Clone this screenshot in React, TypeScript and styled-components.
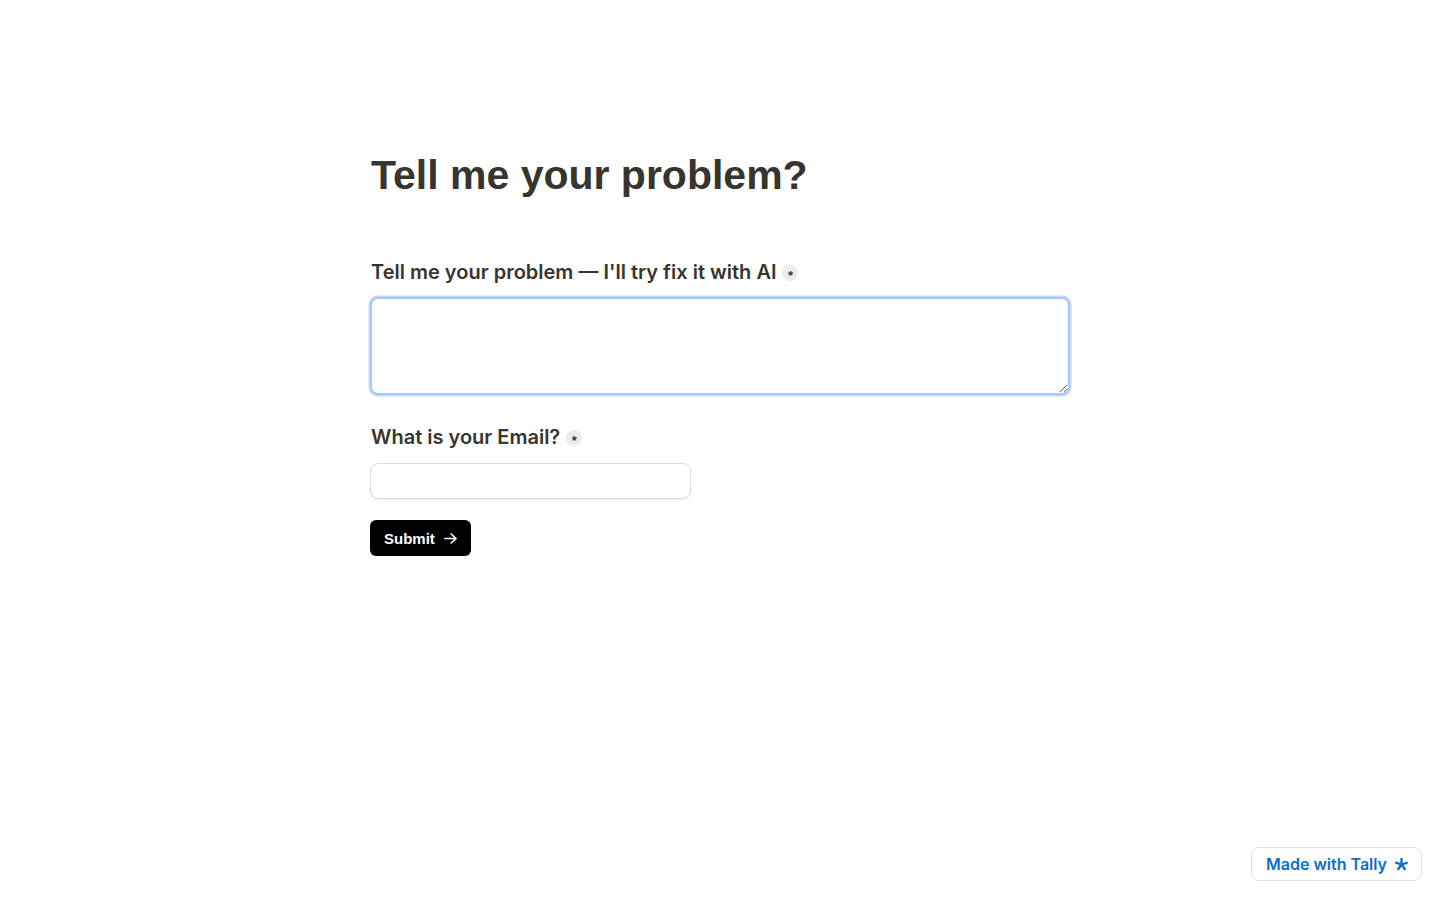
import React from 'react';
import styled, { createGlobalStyle } from 'styled-components';

const GlobalStyle = createGlobalStyle`
  html, body {
    margin: 0;
    padding: 0;
    background: #ffffff;
  }
  body {
    font-family: Inter, "Noto Sans", sans-serif;
    color: #37352f;
  }
`;

const Page = styled.main`
  min-height: 100vh;
  display: flex;
  justify-content: center;
`;

const FormColumn = styled.form`
  width: 700px;
  padding-top: 151px;
  display: flex;
  flex-direction: column;
`;

const Title = styled.h1`
  margin: 0 0 59px 1px;
  font-family: "Liberation Sans", Arial, sans-serif;
  font-weight: 700;
  font-size: 41px;
  line-height: 48px;
  color: #37352f;
`;

const Question = styled.label`
  display: flex;
  align-items: center;
  gap: 6px;
  margin: 0 0 11px 1px;
  font-size: 20px;
  font-weight: 600;
  line-height: 28px;
  color: #37352f;
`;

const Required = styled.span`
  display: inline-flex;
  align-items: center;
  justify-content: center;
  width: 16px;
  height: 16px;
  margin-top: 2px;
  border-radius: 50%;
  background: #ececec;
  color: #37352f;
  font-family: "Liberation Sans", Arial, sans-serif;
  font-size: 13px;
  font-weight: 700;
  line-height: 1;
  padding-top: 4px;
  box-sizing: border-box;
`;

const TextArea = styled.textarea`
  box-sizing: border-box;
  width: 700px;
  height: 98px;
  margin: 0 0 28px 0;
  padding: 8px 10px;
  border: 2px solid #a6c9f3;
  border-radius: 8px;
  box-shadow: 0 0 0 1.5px #c4dbf7;
  font-family: Inter, sans-serif;
  font-size: 16px;
  outline: none;
  resize: vertical;
`;

const TextInput = styled.input`
  box-sizing: border-box;
  width: 321px;
  height: 36px;
  margin: 1px 0 21px 0;
  padding: 0 10px;
  border: 1px solid #dcdcdc;
  border-radius: 8px;
  box-shadow: 0 1px 1px rgba(0, 0, 0, 0.06);
  font-family: Inter, sans-serif;
  font-size: 16px;
  outline: none;
`;

const SubmitButton = styled.button`
  align-self: flex-start;
  display: inline-flex;
  align-items: center;
  gap: 9px;
  height: 36px;
  padding: 0 14px;
  border: none;
  border-radius: 6px;
  background: #000000;
  color: #ffffff;
  font-family: "Liberation Sans", Arial, sans-serif;
  font-weight: 700;
  font-size: 15px;
  cursor: pointer;
`;

const Badge = styled.a`
  position: fixed;
  right: 18px;
  bottom: 19px;
  display: inline-flex;
  align-items: center;
  gap: 8px;
  height: 34px;
  padding: 0 13px 0 14px;
  box-sizing: border-box;
  border: 1px solid #dfe1e4;
  border-radius: 8px;
  background: #ffffff;
  color: #0b6fcb;
  font-family: Inter, sans-serif;
  font-weight: 600;
  font-size: 16px;
  text-decoration: none;
`;

const SubmitArrow = () => (
  <svg width="13" height="11" viewBox="0 0 13 11" aria-hidden="true">
    <path
      d="M1 5.5H12M7.2 1L12 5.5L7.2 10"
      fill="none"
      stroke="#ffffff"
      strokeWidth="1.7"
      strokeLinecap="round"
      strokeLinejoin="round"
    />
  </svg>
);

const TallyMark = () => (
  <svg width="13" height="13" viewBox="-10 -10 20 20" aria-hidden="true">
    {[0, 72, 144, 216, 288].map(angle => (
      <line
        key={angle}
        x1="0"
        y1="0"
        x2="0"
        y2="-8.5"
        stroke="#0b6fcb"
        strokeWidth="3.6"
        strokeLinecap="round"
        transform={`rotate(${angle})`}
      />
    ))}
  </svg>
);

const App: React.FC = () => {
  return (
    <>
      <GlobalStyle />
      <Page>
        <FormColumn onSubmit={e => e.preventDefault()}>
          <Title>Tell me your problem?</Title>

          <Question htmlFor="problem">
            Tell me your problem — I'll try fix it with AI
            <Required>*</Required>
          </Question>
          <TextArea id="problem" />

          <Question htmlFor="email">
            What is your Email?
            <Required>*</Required>
          </Question>
          <TextInput id="email" type="email" />

          <SubmitButton type="submit">
            Submit
            <SubmitArrow />
          </SubmitButton>
        </FormColumn>
      </Page>
      <Badge href="#">
        Made with Tally
        <TallyMark />
      </Badge>
    </>
  );
};

export default App;
